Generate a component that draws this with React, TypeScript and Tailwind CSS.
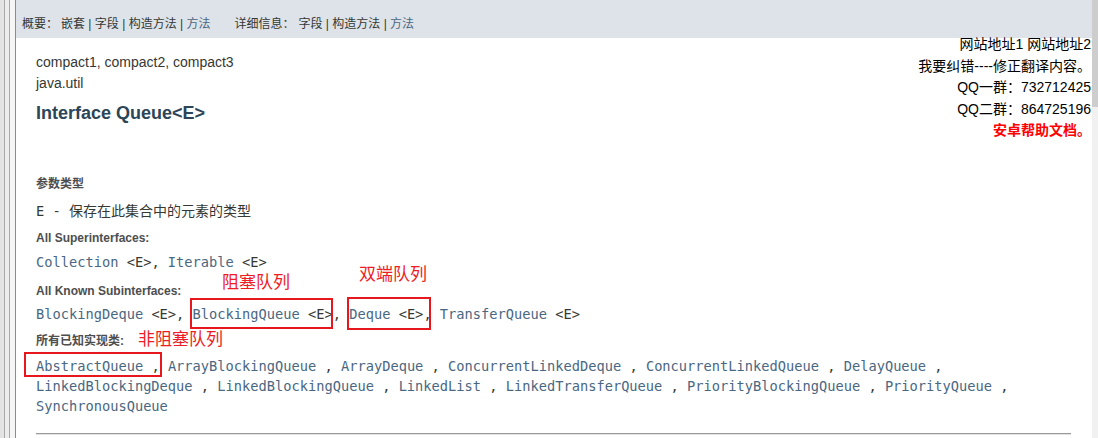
const sans = "font-['Liberation_Sans','Noto_Sans_CJK_SC',sans-serif]";
const mono = "font-['DejaVu_Sans_Mono','Noto_Sans_CJK_SC',monospace]";

const IMPL = [
	"AbstractQueue",
	"ArrayBlockingQueue",
	"ArrayDeque",
	"ConcurrentLinkedDeque",
	"ConcurrentLinkedQueue",
	"DelayQueue",
	"LinkedBlockingDeque",
	"LinkedBlockingQueue",
	"LinkedList",
	"LinkedTransferQueue",
	"PriorityBlockingQueue",
	"PriorityQueue",
	"SynchronousQueue",
];

const SUB = ["BlockingDeque", "BlockingQueue", "Deque", "TransferQueue"];

const NavLinks = ({ items }: { items: string[] }) => (
	<span>
		{items.map((it, i) => (
			<span key={it}>
				<span className={i === items.length - 1 ? "text-[#4a6782]" : "text-[#353833]"}>{it}</span>
				{i < items.length - 1 && <span className="text-[#353833]"> | </span>}
			</span>
		))}
	</span>
);

const Label = ({ children, className }: { children: React.ReactNode; className?: string }) => (
	<div className={`text-[12px] leading-[16px] font-bold text-[#4e4e4e] ${className ?? ""}`}>{children}</div>
);

export default function App() {
	return (
		<div className={`flex h-[438px] w-[1098px] overflow-hidden bg-white ${sans}`}>
			{/* frame edges on the left */}
			<div className="flex h-full w-[16px] shrink-0">
				<div className="w-[4px] bg-[#e3e3e3]" />
				<div className="w-[1px] bg-[#a9a9a9]" />
				<div className="w-[4px] bg-[#ececec]" />
				<div className="w-[1px] bg-[#a9a9a9]" />
				<div className="w-[5px] bg-[#f6f6f6]" />
				<div className="w-[1px] bg-[#8c8c8c]" />
			</div>

			<div className="relative min-w-0 flex-1">
				<div className="h-[38px] bg-[#dee3e9] pl-[6px] pt-[16px] text-[12px] leading-[16px] text-[#353833]">
					<span>概要：</span>
					<span className="ml-[3px]">
						<NavLinks items={["嵌套", "字段", "构造方法", "方法"]} />
					</span>
					<span className="ml-[24px]">详细信息：</span>
					<span className="ml-[4px]">
						<NavLinks items={["字段", "构造方法", "方法"]} />
					</span>
				</div>

				<div className="pl-[20px] pr-[21px] pt-[14px] text-[#353833]">
					<div className="text-[14px] leading-[21px]">compact1, compact2, compact3</div>
					<div className="text-[14px] leading-[21px]">java.util</div>
					<h2 className="mt-[7px] text-[18px] leading-[24px] font-bold text-[#2c4557]">Interface Queue&lt;E&gt;</h2>

					<Label className="mt-[51px]">参数类型</Label>
					<div className="mt-[9px] leading-[20px]">
						<span className={`${mono} text-[13.7px]`}>E - </span>
						<span className="text-[14px]">保存在此集合中的元素的类型</span>
					</div>

					<Label className="mt-[9px]">All Superinterfaces:</Label>
					<div className={`mt-[6px] ${mono} text-[13.7px] leading-[20px] whitespace-pre text-[#4a6782]`}>
						{"Collection "}
						<span className="text-[#353833]">&lt;E&gt;, </span>
						{"Iterable "}
						<span className="text-[#353833]">&lt;E&gt;</span>
					</div>

					<Label className="mt-[11px]">All Known Subinterfaces:</Label>
					<div className={`mt-[5px] ${mono} text-[13.7px] leading-[20px] whitespace-pre text-[#4a6782]`}>
						{SUB.map((s, i) => (
							<span key={s}>
								{s + " "}
								<span className="text-[#353833]">
									&lt;E&gt;{i < SUB.length - 1 ? ", " : ""}
								</span>
							</span>
						))}
					</div>

					<Label className="mt-[9px]">所有已知实现类:</Label>
					<div className={`mt-[7px] ${mono} text-[13.7px] leading-[20px] text-[#4a6782]`}>
						{IMPL.map((c, i) => (
							<span key={c}>
								{c}
								{i < IMPL.length - 1 && <span className="text-[#353833]">{" , "}</span>}
							</span>
						))}
					</div>

					<div className="mt-[17px] border-t border-b border-t-[#9a9a9a] border-b-[#e2e2e2]" />
				</div>

				{/* site info box, floats over the nav bar */}
				<div className="absolute right-[1px] top-[34px] text-right text-[14px] leading-[21.5px] text-black">
					<div>网站地址1 网站地址2</div>
					<div>我要纠错----修正翻译内容。</div>
					<div>QQ一群：732712425</div>
					<div>QQ二群：864725196</div>
					<div className="font-bold text-[#ff0000]">安卓帮助文档。</div>
				</div>

				{/* red annotations drawn over the page */}
				<div className="absolute left-[206px] top-[273px] text-[17px] leading-[20px] text-[#ee1c24]">阻塞队列</div>
				<div className="absolute left-[343px] top-[265px] text-[17px] leading-[20px] text-[#ee1c24]">双端队列</div>
				<div className="absolute left-[122px] top-[330px] text-[17px] leading-[20px] text-[#ee1c24]">非阻塞队列</div>
				<div className="absolute left-[174px] top-[298px] h-[31px] w-[143px] border-2 border-[#e8171e]" />
				<div className="absolute left-[331px] top-[297px] h-[33px] w-[84px] border-2 border-[#e8171e]" />
				<div className="absolute left-[8px] top-[352px] h-[25px] w-[138px] border-2 border-[#e8171e]" />
			</div>

			{/* scrollbar */}
			<div className="flex h-full w-[6px] shrink-0 flex-col bg-[#f1f1f1]">
				<div className="h-[107px] bg-[#cdcdcd]" />
			</div>
		</div>
	);
}
